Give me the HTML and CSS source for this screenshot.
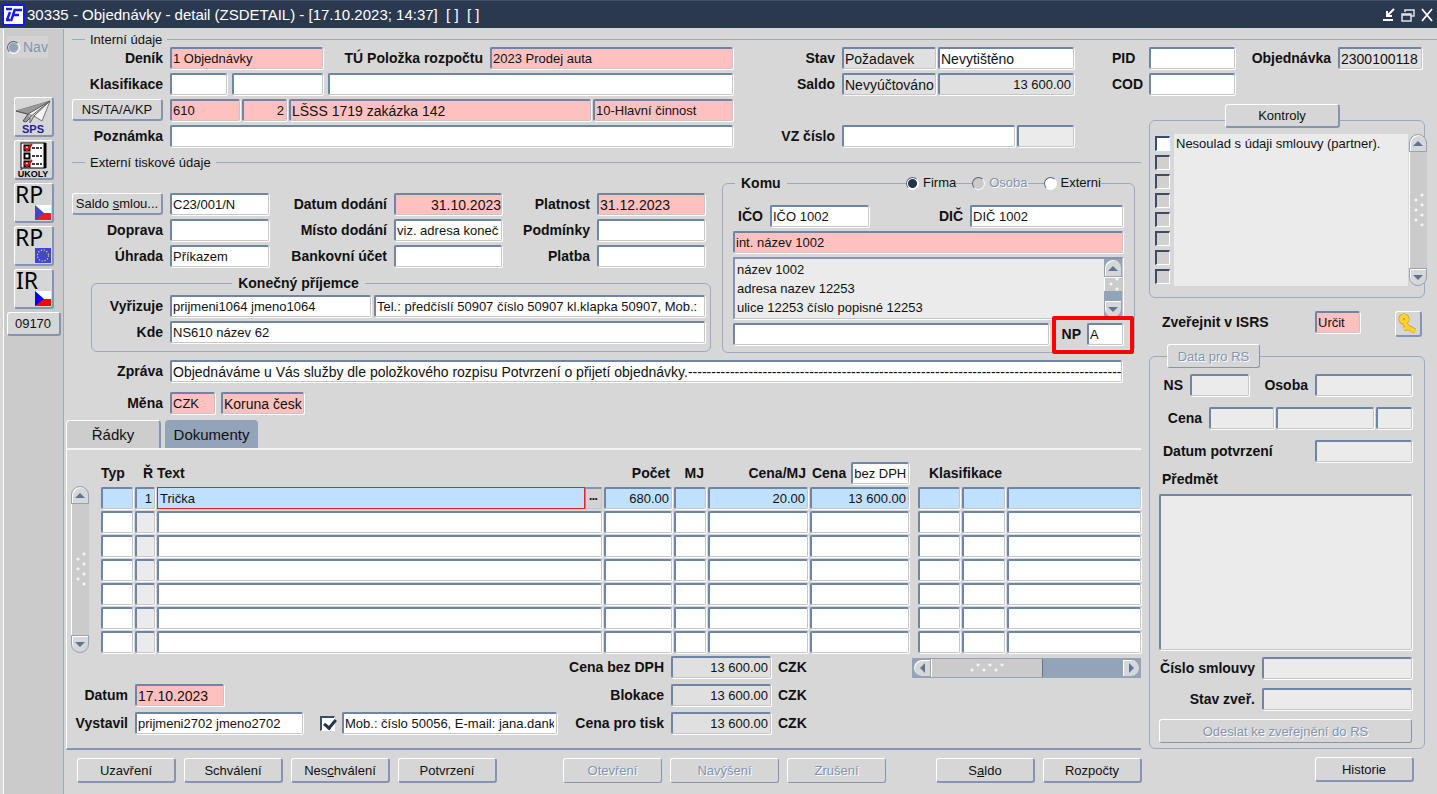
FILE: index.html
```
<!DOCTYPE html>
<html lang="cs">
<head>
    <meta charset="UTF-8">
    <meta name="viewport" content="width=device-width, initial-scale=1.0">
    <title>30335 - Objednávky - detail (ZSDETAIL)</title>
    <link rel="stylesheet" href="styles.css">
</head>
<body>
    <!-- Title bar -->
    <header class="titlebar">
        <svg class="app-logo" viewBox="0 0 23 22" width="23" height="22">
            <rect x="1" y="1" width="21" height="20" fill="#fff" stroke="#1818e8" stroke-width="2"/>
            <path d="M4 5h6M8 8l-3 8M4 16h4M12 6h8M13 5l-4 12M11 11h6" stroke="#1818e8" stroke-width="2.4" fill="none"/>
        </svg>
        <h1>30335 - Objednávky - detail (ZSDETAIL) - [17.10.2023; 14:37]&nbsp; [ ]&nbsp; [ ]</h1>
        <div class="window-buttons">
            <button type="button" aria-label="Minimalizovat"><svg viewBox="0 0 14 14" width="14" height="14"><path d="M12 1L5 8M5 3v5h5M1 12h10" stroke="#fff" stroke-width="2" fill="none"/></svg></button>
            <button type="button" aria-label="Obnovit"><svg viewBox="0 0 14 14" width="14" height="14"><path d="M4 4V2h9v6h-3M4 2h9M1 6h9v7H1zM1 7h9" stroke="#dde2ea" stroke-width="1.5" fill="none"/></svg></button>
            <button type="button" aria-label="Zavřít"><svg viewBox="0 0 14 14" width="14" height="14"><path d="M2 1l10 12M12 1L2 13" stroke="#fff" stroke-width="1.8" fill="none"/></svg></button>
        </div>
    </header>

    <div class="window">
        <!-- Left toolbar -->
        <nav class="toolbar">
            <label class="nav-radio"><input type="radio" class="radio" name="nav" checked disabled> Nav</label>
            <button type="button" class="btn tool" aria-label="SPS">
                <svg viewBox="0 0 36 36" width="36" height="36">
                    <path d="M1 12L35 2 27 22 19 17z" fill="#f4f4f4" stroke="#777"/>
                    <path d="M1 12l12 3L35 2M13 15l-5 7 3 1 4-4" fill="#999" stroke="#555"/>
                    <path d="M19 17L35 2 15 18v6z" fill="#ccc" stroke="#666"/>
                    <text x="18" y="34" text-anchor="middle" class="tool-sps">SPS</text>
                </svg>
            </button>
            <button type="button" class="btn tool" aria-label="Úkoly">
                <svg viewBox="0 0 36 36" width="36" height="36">
                    <rect x="6" y="1" width="24" height="25" fill="#fff" stroke="#000"/>
                    <path d="M30 1v25" stroke="#000" stroke-width="3"/>
                    <path d="M9.500 3.500h5v5h-5zM9.500 11.500h5v5h-5zM9.500 19.500h5v5h-5z" fill="#fff" stroke="#000" stroke-width="2"/>
                    <path d="M17 6h10M17 14h10M17 22h10" stroke="#000" stroke-width="1.500" stroke-dasharray="3 1"/>
                    <path d="M9 5l3 3 5-6M9 21l3 3 5-6" stroke="#f00000" stroke-width="2" fill="none"/>
                    <text x="18" y="35" text-anchor="middle" class="tool-ukoly">ÚKOLY</text>
                </svg>
            </button>
            <button type="button" class="btn tool" aria-label="RP CZ">
                <svg viewBox="0 0 36 36" width="36" height="36">
                    <path d="M20 20h16v8H20z" fill="#fff"/><path d="M20 28h16v7H20z" fill="#ee1c25"/><path d="M20 20l9 8-9 7z" fill="#3f48cc"/>
                    <text x="0" y="18" class="tool-text">RP</text>
                </svg>
            </button>
            <button type="button" class="btn tool" aria-label="RP EU">
                <svg viewBox="0 0 36 36" width="36" height="36">
                    <path d="M20 20h16v15H20z" fill="#3f48cc"/>
                    <circle cx="28" cy="27.500" r="5.500" fill="none" stroke="#ffe400" stroke-width="1.200" stroke-dasharray="1.200 1.680"/>
                    <text x="0" y="18" class="tool-text">RP</text>
                </svg>
            </button>
            <button type="button" class="btn tool" aria-label="IR CZ">
                <svg viewBox="0 0 36 36" width="36" height="36">
                    <path d="M20 20h16v8H20z" fill="#fff"/><path d="M20 28h16v7H20z" fill="#f00"/><path d="M20 20l9 8-9 7z" fill="#00f"/>
                    <text x="1" y="18" class="tool-text">IR</text>
                </svg>
            </button>
            <button type="button" class="btn tool-code">09170</button>
        </nav>

        <main class="form">
            <h2 class="legend">Interní údaje</h2>
            <div class="columns">
                <div class="left">
                    <!-- Interní údaje -->
                    <section class="internal">
                        <div class="rows grow">
                            <div class="row">
                                <label class="lbl" for="denik">Deník</label>
                                <input class="field pink w153" id="denik" value="1 Objednávky">
                                <label class="lbl w153" for="polozka">TÚ Položka rozpočtu</label>
                                <input class="field pink grow" id="polozka" value="2023 Prodej auta">
                            </div>
                            <div class="row tight">
                                <label class="lbl" for="klas1">Klasifikace</label>
                                <input class="field w57" id="klas1">
                                <input class="field w91" aria-label="Klasifikace 2">
                                <input class="field grow" aria-label="Klasifikace 3">
                            </div>
                            <div class="row dense">
                                <button type="button" class="btn lbl-btn">NS/TA/A/KP</button>
                                <input class="field pink w70" aria-label="NS" value="610">
                                <input class="field pink num w45" aria-label="TA" value="2">
                                <input class="field pink text-lg grow" aria-label="A" value="LŠSS 1719 zakázka 142">
                                <input class="field pink w140" aria-label="KP" value="10-Hlavní činnost">
                            </div>
                            <div class="row">
                                <label class="lbl" for="poznamka">Poznámka</label>
                                <input class="field grow" id="poznamka">
                            </div>
                        </div>
                        <div class="rows state">
                            <div class="row dense">
                                <label class="lbl" for="stav">Stav</label>
                                <input class="field gray text-lg w94" id="stav" value="Požadavek" readonly>
                                <input class="field text-lg grow" aria-label="Tisk" value="Nevytištěno">
                            </div>
                            <div class="row dense">
                                <label class="lbl" for="saldo">Saldo</label>
                                <input class="field gray text-lg w94" id="saldo" value="Nevyúčtováno" readonly>
                                <input class="field gray num grow" aria-label="Saldo částka" value="13 600.00" readonly>
                            </div>
                            <div class="row"></div>
                            <div class="row dense">
                                <label class="lbl" for="vz">VZ číslo</label>
                                <input class="field grow" id="vz">
                                <input class="field off w57" aria-label="VZ stav" readonly>
                            </div>
                        </div>
                        <div class="rows ids">
                            <label for="pid">PID</label>
                            <label for="cod">COD</label>
                        </div>
                    </section>

                    <!-- Externí tiskové údaje -->
                    <h2 class="legend second">Externí tiskové údaje</h2>
                    <section class="external">
                        <div class="grow">
                            <div class="rows delivery">
                                <div class="row">
                                    <button type="button" class="btn lbl-btn">Saldo <u>s</u>mlou...</button>
                                    <input class="field w99" aria-label="Smlouva" value="C23/001/N">
                                    <label class="lbl grow" for="datdod">Datum dodání</label>
                                    <input class="field pink num text-lg w108" id="datdod" value="31.10.2023">
                                    <label class="lbl w81" for="platnost">Platnost</label>
                                    <input class="field pink text-lg w108" id="platnost" value="31.12.2023">
                                </div>
                                <div class="row">
                                    <label class="lbl" for="doprava">Doprava</label>
                                    <input class="field w99" id="doprava">
                                    <label class="lbl grow" for="misto">Místo dodání</label>
                                    <input class="field w108" id="misto" value="viz. adresa konečného příjemce">
                                    <label class="lbl w81" for="podminky">Podmínky</label>
                                    <input class="field w108" id="podminky">
                                </div>
                                <div class="row">
                                    <label class="lbl" for="uhrada">Úhrada</label>
                                    <input class="field w99" id="uhrada" value="Příkazem">
                                    <label class="lbl grow" for="ucet">Bankovní účet</label>
                                    <input class="field w108" id="ucet">
                                    <label class="lbl w81" for="platba">Platba</label>
                                    <input class="field w108" id="platba">
                                </div>
                            </div>
                            <div class="panel recipient">
                                <div class="panel-head"><h3>Konečný příjemce</h3></div>
                                <div class="rows">
                                    <div class="row">
                                        <label class="lbl" for="vyrizuje">Vyřizuje</label>
                                        <div class="pair grow">
                                            <input class="field w201" id="vyrizuje" value="prijmeni1064 jmeno1064">
                                            <input class="field grow" aria-label="Kontakt" value="Tel.: předčíslí 50907 číslo 50907 kl.klapka 50907, Mob.:">
                                        </div>
                                    </div>
                                    <div class="row">
                                        <label class="lbl" for="kde">Kde</label>
                                        <input class="field grow" id="kde" value="NS610 název 62">
                                    </div>
                                </div>
                            </div>
                        </div>

                        <div class="panel addressee">
                            <div class="panel-head">
                                <h3>Komu</h3>
                                <span class="radios">
                                    <label><input type="radio" class="radio" name="komu" checked> Firma</label>
                                    <label class="disabled"><input type="radio" class="radio" name="komu" disabled> Osoba</label>
                                    <label><input type="radio" class="radio" name="komu"> Externi</label>
                                </span>
                            </div>
                            <div class="rows">
                                <div class="row">
                                    <label class="lbl w30" for="ico">IČO</label>
                                    <input class="field w99" id="ico" value="IČO 1002">
                                    <label class="lbl grow" for="dic">DIČ</label>
                                    <input class="field w153" id="dic" value="DIČ 1002">
                                </div>
                                <input class="field pink" aria-label="Interní název" value="int. název 1002">
                                <div class="address">
                                    <textarea class="grow" aria-label="Adresa" readonly>název 1002
adresa nazev 12253
ulice 12253 číslo popisné 12253</textarea>
                                    <div class="vscroll blue">
                                        <button type="button" class="up" aria-label="Nahoru"></button>
                                        <span class="thumb"><i class="dots"></i></span>
                                        <button type="button" class="down" aria-label="Dolů"></button>
                                    </div>
                                </div>
                                <div class="row">
                                    <input class="field grow" aria-label="Doplněk adresy">
                                    <div class="marked">
                                        <label for="np">NP</label>
                                        <input class="field w36" id="np" value="A">
                                    </div>
                                </div>
                            </div>
                        </div>
                    </section>

                    <div class="row message">
                        <label class="lbl" for="zprava">Zpráva</label>
                        <input class="field text-lg grow" id="zprava" value="Objednáváme u Vás služby dle položkového rozpisu Potvrzení o přijetí objednávky.------------------------------------------------------------------------------------------------------------------------------------------------------">
                    </div>
                    <div class="row currency">
                        <label class="lbl" for="mena">Měna</label>
                        <div class="pair wide">
                            <input class="field pink w45" id="mena" value="CZK">
                            <input class="field pink text-lg w83" aria-label="Název měny" value="Koruna česk">
                        </div>
                    </div>

                    <!-- Řádky / Dokumenty -->
                    <div class="tabs">
                        <button type="button" class="tab active">Řádky</button>
                        <button type="button" class="tab">Dokumenty</button>
                    </div>
                    <section class="tab-panel">
                        <div class="lines">
                            <div class="vscroll">
                                <button type="button" class="up" aria-label="Nahoru"></button>
                                <span class="thumb"><i class="dots"></i></span>
                                <button type="button" class="down" aria-label="Dolů"></button>
                            </div>
                            <table>
                                <colgroup>
                                    <col class="c-typ"><col class="c-r"><col><col class="c-pocet"><col class="c-mj">
                                    <col class="c-cenamj"><col class="c-cena"><col class="c-k1"><col class="c-k2"><col class="c-k3">
                                </colgroup>
                                <thead>
                                    <tr>
                                        <th>Typ</th>
                                        <th class="right">Ř</th>
                                        <th>Text</th>
                                        <th class="right">Počet</th>
                                        <th class="right">MJ</th>
                                        <th class="right">Cena/MJ</th>
                                        <th><div class="th-price"><label for="dph">Cena</label><input class="field grow" id="dph" value="bez DPH"></div></th>
                                        <th colspan="3" class="th-klas">Klasifikace</th>
                                    </tr>
                                </thead>
                                <tbody id="lines">
                                    <tr class="current">
                                        <td><input class="field" aria-label="Typ"></td>
                                        <td><input class="field num" aria-label="Ř" value="1"></td>
                                        <td><div class="edit"><input class="field active" aria-label="Text" value="Trička"><button type="button" aria-label="Upravit text">•••</button></div></td>
                                        <td><input class="field num" aria-label="Počet" value="680.00"></td>
                                        <td><input class="field" aria-label="MJ"></td>
                                        <td><input class="field num" aria-label="Cena/MJ" value="20.00"></td>
                                        <td><input class="field num" aria-label="Cena" value="13 600.00"></td>
                                        <td><input class="field" aria-label="Klasifikace 1"></td>
                                        <td><input class="field" aria-label="Klasifikace 2"></td>
                                        <td><input class="field" aria-label="Klasifikace 3"></td>
                                    </tr>
                                </tbody>
                            </table>
                        </div>
                        <div class="summary">
                            <div class="rows issued">
                                <div class="row">
                                    <label class="lbl w57" for="datum">Datum</label>
                                    <input class="field pink text-lg w89" id="datum" value="17.10.2023">
                                </div>
                                <div class="row">
                                    <label class="lbl w57" for="vystavil">Vystavil</label>
                                    <input class="field w168" id="vystavil" value="prijmeni2702 jmeno2702">
                                    <input type="checkbox" class="check" aria-label="Tisknout kontakt" checked>
                                    <input class="field w215" aria-label="Kontakt vystavil" value="Mob.: číslo 50056, E-mail: jana.dankova@firma.cz">
                                </div>
                            </div>
                            <div class="rows totals">
                                <div class="row">
                                    <label class="lbl w100" for="bezdph">Cena bez DPH</label>
                                    <input class="field gray num w100" id="bezdph" value="13 600.00" readonly>
                                    <b>CZK</b>
                                </div>
                                <div class="row">
                                    <label class="lbl w100" for="blokace">Blokace</label>
                                    <input class="field gray num w100" id="blokace" value="13 600.00" readonly>
                                    <b>CZK</b>
                                </div>
                                <div class="row">
                                    <label class="lbl w100" for="tisk">Cena pro tisk</label>
                                    <input class="field gray num w100" id="tisk" value="13 600.00" readonly>
                                    <b>CZK</b>
                                </div>
                            </div>
                            <div class="hscroll">
                                <button type="button" class="prev" aria-label="Vlevo"></button>
                                <span class="thumb"><i class="dots wide"></i></span>
                                <button type="button" class="next" aria-label="Vpravo"></button>
                            </div>
                        </div>
                    </section>

                    <div class="actions">
                        <button type="button" class="btn">Uzavření</button>
                        <button type="button" class="btn">Schválení</button>
                        <button type="button" class="btn">Nes<u>c</u>hválení</button>
                        <button type="button" class="btn">Potvrzení</button>
                        <span class="actions-group">
                            <button type="button" class="btn" disabled>Otevření</button>
                            <button type="button" class="btn w109" disabled>Navýšení</button>
                            <button type="button" class="btn" disabled>Zrušení</button>
                        </span>
                        <span class="actions-end">
                            <button type="button" class="btn">S<u>a</u>ldo</button>
                            <button type="button" class="btn">Rozpočty</button>
                        </span>
                    </div>
                </div>

                <!-- Right column -->
                <aside class="right-col">
                    <div class="rows">
                        <div class="row order">
                            <input class="field w86" id="pid">
                            <label class="lbl grow" for="objednavka">Objednávka</label>
                            <input class="field gray text-lg w84" id="objednavka" value="2300100118" readonly>
                        </div>
                        <div class="row">
                            <input class="field w86" id="cod">
                        </div>
                    </div>

                    <div class="panel checks">
                        <button type="button" class="btn checks-btn">Kontroly</button>
                        <div class="checks-body">
                            <ul>
                                <li class="current"><input type="checkbox" class="check" id="k1"><label for="k1">Nesoulad s údaji smlouvy (partner).</label></li>
                                <li><input type="checkbox" class="check" id="k2" disabled><label for="k2"></label></li>
                                <li><input type="checkbox" class="check" id="k3" disabled><label for="k3"></label></li>
                                <li><input type="checkbox" class="check" id="k4" disabled><label for="k4"></label></li>
                                <li><input type="checkbox" class="check" id="k5" disabled><label for="k5"></label></li>
                                <li><input type="checkbox" class="check" id="k6" disabled><label for="k6"></label></li>
                                <li><input type="checkbox" class="check" id="k7" disabled><label for="k7"></label></li>
                                <li><input type="checkbox" class="check" id="k8" disabled><label for="k8"></label></li>
                            </ul>
                            <div class="vscroll">
                                <button type="button" class="up" aria-label="Nahoru"></button>
                                <span class="thumb"><i class="dots"></i></span>
                                <button type="button" class="down" aria-label="Dolů"></button>
                            </div>
                        </div>
                    </div>

                    <div class="publish">
                        <label class="grow" for="isrs">Zveřejnit v ISRS</label>
                        <input class="field pink w45" id="isrs" value="Určit">
                        <button type="button" class="btn key" aria-label="Klíč">
                            <svg viewBox="0 0 24 24" width="24" height="24">
                                <g fill="none" stroke="#c58a00" stroke-width="5"><circle cx="8" cy="7" r="3"/><path d="M8 9l3 6 8 4M12 15l-4 2M17 18l-1 2"/></g>
                                <g fill="none" stroke="#ffd22e" stroke-width="4"><circle cx="8" cy="7" r="3"/><path d="M8 9l3 6 8 4M12 15l-4 2M17 18l-1 2"/></g>
                            </svg>
                        </button>
                    </div>

                    <div class="panel registry">
                        <button type="button" class="btn registry-btn" disabled>Data pro RS</button>
                        <div class="row">
                            <label class="lbl w24" for="ns">NS</label>
                            <input class="field off w59" id="ns" disabled>
                            <label class="lbl grow" for="osoba">Osoba</label>
                            <input class="field off w97" id="osoba" disabled>
                        </div>
                        <div class="row dense">
                            <label class="lbl w43" for="cena">Cena</label>
                            <input class="field off w65" id="cena" disabled>
                            <input class="field off grow" aria-label="Cena s DPH" disabled>
                            <input class="field off w36" aria-label="Měna RS" disabled>
                        </div>
                        <div class="row confirmed">
                            <label for="potvrzeni">Datum potvrzení</label>
                            <input class="field off w97" id="potvrzeni" disabled>
                        </div>
                        <label class="subject-label" for="predmet">Předmět</label>
                        <textarea class="field off subject" id="predmet" disabled></textarea>
                        <div class="row">
                            <label class="lbl grow" for="smlouva">Číslo smlouvy</label>
                            <input class="field off w150" id="smlouva" disabled>
                        </div>
                        <div class="row">
                            <label class="lbl grow" for="zver">Stav zveř.</label>
                            <input class="field off w150" id="zver" disabled>
                        </div>
                        <button type="button" class="btn send" disabled>Odeslat ke zveřejnění do RS</button>
                    </div>
                    <div class="actions history">
                        <button type="button" class="btn">Historie</button>
                    </div>
                </aside>
            </div>
        </main>
    </div>
    <script src="script.js"></script>
</body>
</html>
```

FILE: styles.css
```
/* General styling */
* {
    margin: 0;
    padding: 0;
    box-sizing: border-box;
}
body {
    min-height: 100vh;
    display: flex;
    flex-direction: column;
    font-family: "Liberation Sans", Arial, sans-serif;
    font-size: 14px;
    color: #111;
    background-color: #d7d7d7;
}
button, input, textarea {
    font: inherit;
    color: inherit;
}
h1, h2, h3 {
    font-weight: normal;
}

/* Title bar */
.titlebar {
    display: flex;
    align-items: center;
    height: 28px;
    padding: 0 3px 0 2px;
    background-color: #2b394f;
    border-top: 1px solid #44536a;
    color: #fff;
}
.titlebar h1 {
    flex: 1;
    margin-left: 2px;
    font-size: 15px;
}
.window-buttons {
    display: flex;
    gap: 5px;
}
.window-buttons button {
    display: flex;
    border: none;
    background: none;
}

/* Toolbar */
.window {
    flex: 1;
    display: flex;
}
.toolbar {
    display: flex;
    flex-direction: column;
    align-items: center;
    gap: 3px;
    width: 61px;
    flex: none;
    margin: 1px 0 0 3px;
    padding-top: 7px;
    background-color: #cbcbcb;
    border-left: 1px solid #fff;
    border-right: 1px solid #9aaac0;
}
.nav-radio {
    display: flex;
    align-items: center;
    align-self: flex-start;
    gap: 3px;
    height: 22px;
    margin: 0 0 36px 3px;
    background-color: #d3d3d3;
    color: #8195b0;
}
.tool {
    width: 40px;
    height: 40px;
    display: flex;
    align-items: center;
    justify-content: center;
}
.tool svg {
    overflow: visible;
}
.tool-text {
    font-family: "Noto Sans", sans-serif;
    font-size: 23px;
    fill: #000;
}
.tool-sps {
    font-size: 11px;
    font-weight: bold;
    fill: #1c1c9c;
}
.tool-ukoly {
    font-size: 9px;
    font-weight: bold;
    fill: #000;
}
.tool-code {
    width: 54px;
    height: 24px;
}

/* Buttons */
.btn {
    background-color: #d6d6d6;
    border: 1px solid #fff;
    border-right: 2px solid #8395b0;
    border-bottom: 2px solid #8395b0;
    border-radius: 3px;
    font-size: 13px;
    white-space: nowrap;
}
.btn:disabled {
    color: #8195b0;
    border-right-width: 1px;
    border-bottom-width: 1px;
    text-shadow: 1px 1px 0 #fff;
}

/* Fields */
.field {
    display: block;
    width: 100%;
    min-width: 0;
    height: 22px;
    padding: 0 2px 0 1px;
    background-color: #fff;
    border: 1px solid #c6c6c6;
    border-top: 2px solid #6f85a5;
    border-left: 2px solid #6f85a5;
    border-radius: 2px;
    box-shadow: 1px 1px 0 #fff;
    font-size: 13px;
    font-weight: normal;
    outline: none;
    resize: none;
}
.field.text-lg {
    padding-right: 0;
    font-size: 14px;
}
.field.pink {
    background-color: #ffc0c0;
}
.field.gray {
    background-color: #e0e0e0;
}
.field.off {
    background-color: #ebebeb;
}
.field.num {
    text-align: right;
}
.field.active {
    border: 1px solid #f02020;
    border-radius: 0;
    box-shadow: none;
    padding-left: 2px;
}

/* Rows and labels */
.rows {
    display: flex;
    flex-direction: column;
    gap: 4px;
}
.row {
    display: flex;
    align-items: center;
    gap: 7px;
    min-height: 22px;
}
.row.tight {
    gap: 5px;
}
.row.dense {
    gap: 2px;
}
.row.tight .lbl {
    margin-right: 2px;
}
.row.dense .lbl,
.row.dense .lbl-btn {
    margin-right: 5px;
}
.pair {
    display: flex;
    gap: 3px;
}
.pair.wide {
    gap: 6px;
}
.grow {
    flex: 1;
    min-width: 0;
}
label,
.totals b,
.panel-head h3 {
    font-size: 14px;
    font-weight: bold;
    white-space: nowrap;
}
.lbl {
    width: 91px;
    text-align: right;
}
.lbl-btn {
    width: 91px;
    height: 22px;
    text-align: center;
}
.w24 { width: 24px; flex: none; }
.w30 { width: 30px; flex: none; }
.w36 { width: 36px; flex: none; }
.w43 { width: 43px; flex: none; }
.w45 { width: 45px; flex: none; }
.w57 { width: 57px; flex: none; }
.w59 { width: 59px; flex: none; }
.w65 { width: 65px; flex: none; }
.w70 { width: 70px; flex: none; }
.w81 { width: 81px; flex: none; }
.w83 { width: 83px; flex: none; }
.w84 { width: 84px; flex: none; }
.w86 { width: 86px; flex: none; }
.w89 { width: 89px; flex: none; }
.w91 { width: 91px; flex: none; }
.w94 { width: 94px; flex: none; }
.w97 { width: 97px; flex: none; }
.w99 { width: 99px; flex: none; }
.w100 { width: 100px; flex: none; }
.w108 { width: 108px; flex: none; }
.w140 { width: 140px; flex: none; }
.w150 { width: 150px; flex: none; }
.w153 { width: 153px; flex: none; }
.w168 { width: 168px; flex: none; }
.w201 { width: 201px; flex: none; }
.w215 { width: 215px; flex: none; }

/* Section titles with a line on both sides */
.legend {
    display: flex;
    align-items: center;
    gap: 5px;
    height: 16px;
    font-size: 13px;
}
.legend::before,
.legend::after {
    content: "";
    height: 1px;
    width: 13px;
    background-color: #9aaac0;
}
.legend::after {
    flex: 1;
}
.legend.second {
    margin: 7px 8px 0 0;
}

/* Page columns */
.form {
    flex: 1;
    min-width: 0;
    padding: 3px 0 0 8px;
}
.columns {
    display: flex;
}
.left {
    flex: 1;
    min-width: 0;
}
.right-col {
    flex: none;
    width: 276px;
    margin-right: 12px;
}
.internal {
    display: flex;
}
.state {
    width: 341px;
}
.state .lbl {
    width: 102px;
}
.ids {
    width: 75px;
    padding-left: 38px;
    line-height: 22px;
}

/* Panels */
.panel {
    border: 1px solid #9aaac0;
    border-radius: 6px;
}
.panel-head {
    display: flex;
    height: 16px;
    margin-top: -9px;
    line-height: 16px;
}
.panel-head h3 {
    padding: 0 6px;
    background-color: #d7d7d7;
}
.external {
    display: flex;
    gap: 11px;
    margin-right: 14px;
}
.delivery {
    padding: 23px 6px 0 0;
}
.recipient {
    margin: 16px 0 0 19px;
    padding: 0 5px 8px 0;
}
.recipient .panel-head {
    justify-content: center;
    padding-right: 200px;
    margin-bottom: 4px;
}
.recipient .lbl {
    width: 71px;
}
.addressee {
    width: 413px;
    margin-top: 13px;
    padding: 0 11px 7px 10px;
}
.addressee .panel-head {
    justify-content: space-between;
    padding: 0 22px 0 2px;
    margin-bottom: 14px;
}
.radios {
    display: flex;
    gap: 16px;
}
.radios label {
    display: flex;
    align-items: center;
    gap: 4px;
    font-size: 13px;
    font-weight: normal;
    background-color: #d7d7d7;
}
.radios .disabled {
    color: #8195b0;
    text-shadow: 1px 1px 0 #fff;
}
.radio {
    appearance: none;
    width: 13px;
    height: 13px;
    border: 1px solid #fff;
    border-top-color: #55647c;
    border-left-color: #55647c;
    border-radius: 50%;
    background-color: #fff;
}
.radio:checked {
    background: radial-gradient(#24344e 4px, #fff 5px);
}
.radio:disabled {
    background-color: #cbcbcb;
}
.radio:checked:disabled {
    background: radial-gradient(#93a3b8 4px, #d3d3d3 5px);
}
.nav-radio {
    font-weight: normal;
}
.address {
    display: flex;
    height: 62px;
    border: 1px solid #c6c6c6;
    border-top: 2px solid #8395b0;
    border-left: 2px solid #8395b0;
    box-shadow: 1px 1px 0 #fff;
    background-color: #ebebeb;
}
.address textarea {
    padding: 1px 2px;
    border: none;
    outline: none;
    resize: none;
    overflow: hidden;
    background: none;
    font-size: 13px;
    line-height: 19px;
}
.marked {
    position: relative;
    display: flex;
    align-items: center;
    gap: 6px;
    margin-left: 6px;
}
.marked::after {
    content: "";
    position: absolute;
    inset: -7px -11px -9px -10px;
    border: 4px solid #f00;
    border-radius: 2px;
    pointer-events: none;
}
.message {
    margin: 7px 27px 10px 0;
}

/* Tabs */
.tabs {
    display: flex;
    gap: 4px;
    margin: 6px 8px 0 -6px;
}
.tab {
    width: 93px;
    height: 28px;
    border: none;
    border-radius: 4px 4px 0 0;
    background-color: #93a3b8;
    font-size: 15px;
}
.tab.active {
    width: 95px;
    background-color: #cdcdcd;
    border: 1px solid #fff;
    border-right: 2px solid #8395b0;
    border-bottom: none;
}
.tab-panel {
    margin: 0 8px 0 -6px;
    padding: 12px 0 14px 4px;
    border-top: 2px solid #f4f4f4;
    border-left: 1px solid #fff;
    border-bottom: 2px solid #8395b0;
}
.lines {
    display: flex;
    gap: 12px;
}
.lines .vscroll {
    margin-top: 24px;
    height: 167px;
}
table {
    flex: 1;
    min-width: 0;
    width: 100%;
    table-layout: fixed;
    border-collapse: collapse;
}
.c-typ, .c-mj { width: 34px; }
.c-r { width: 22px; }
.c-pocet { width: 70px; }
.c-cenamj { width: 102px; }
.c-cena { width: 108px; }
.c-k1 { width: 44px; }
.c-k2 { width: 45px; }
.c-k3 { width: 134px; }
th {
    height: 25px;
    padding-bottom: 3px;
    text-align: left;
    white-space: nowrap;
}
th.right {
    text-align: right;
    padding-right: 4px;
}
th.th-klas {
    padding-left: 11px;
}
.th-price {
    display: flex;
    align-items: center;
    gap: 5px;
    padding: 0 9px 0 2px;
}
td {
    height: 24px;
    padding-right: 2px;
    vertical-align: top;
}
td:nth-child(7) {
    padding-right: 9px;
}
td:last-child {
    padding-right: 0;
}
td:nth-child(2) .field {
    background-color: #ebebeb;
}
.current td .field {
    background-color: #c0e0ff;
}
.edit {
    display: flex;
}
.edit button {
    width: 17px;
    height: 22px;
    flex: none;
    border: 1px solid #c6c6c6;
    border-top: 2px solid #8395b0;
    border-left: 1px solid #8395b0;
    background-color: #d3d3d3;
    font-size: 8px;
}

/* Scrollbars */
.vscroll,
.hscroll {
    display: flex;
    flex: none;
    background-color: #cbcbcb;
}
.vscroll {
    flex-direction: column;
    width: 18px;
    border-radius: 9px;
}
.vscroll.blue {
    border-radius: 0;
}
.vscroll.blue,
.hscroll {
    background-color: #93a3b8;
}
.vscroll button,
.hscroll button {
    display: flex;
    align-items: center;
    justify-content: center;
    flex: none;
    height: 18px;
    border: 1px solid #93a3b8;
    background-color: #d7d7d7;
    box-shadow: inset 1px 1px 0 #fff;
}
.vscroll .up { border-radius: 9px 9px 0 0; }
.vscroll .down { border-radius: 0 0 9px 9px; }
.hscroll .prev { border-radius: 9px 0 0 9px; }
.hscroll .next { border-radius: 0 9px 9px 0; }
.vscroll button::before,
.hscroll button::before {
    content: "";
    border: 5px solid transparent;
}
.vscroll .up::before {
    border-top: none;
    border-bottom-color: #5d7498;
}
.vscroll .down::before {
    border-bottom: none;
    border-top-color: #5d7498;
}
.hscroll .prev::before {
    border-left: none;
    border-right-color: #5d7498;
}
.hscroll .next::before {
    border-right: none;
    border-left-color: #5d7498;
}
.thumb {
    flex: 1;
    display: flex;
    align-items: center;
    justify-content: center;
    border-left: 1px solid #fff;
    background-color: #cbcbcb;
    overflow: hidden;
}
.blue .thumb {
    flex: none;
    height: 14px;
    margin-bottom: auto;
    border-top: 1px solid #fff;
}
.dots {
    width: 12px;
    height: 35px;
    background: radial-gradient(circle at 3px 7px, #f4f4f4 1px, transparent 2px), radial-gradient(circle at 9px 2px, #f4f4f4 1px, transparent 2px);
    background-size: 12px 10px;
}
.dots.wide {
    width: 36px;
    height: 10px;
}
.hscroll {
    width: 229px;
    height: 20px;
    padding: 1px;
    margin: 3px 0 0 auto;
}
.hscroll button {
    width: 18px;
}
.hscroll .thumb {
    flex: none;
    width: 112px;
    margin-right: auto;
    border-right: 1px solid #5d7498;
}

/* Summary under the lines */
.summary {
    display: flex;
}
.summary .rows {
    gap: 6px;
    justify-content: flex-end;
}
.check {
    appearance: none;
    flex: none;
    width: 15px;
    height: 15px;
    border: 1px solid #fff;
    border-top: 2px solid #3d4c64;
    border-left: 2px solid #3d4c64;
    background-color: #fff;
}
.check:disabled {
    background-color: #d0d0d0;
}
.check:checked::before {
    content: "";
    display: block;
    width: 5px;
    height: 9px;
    margin: -1px 0 0 4px;
    border-right: 3px solid #24344e;
    border-bottom: 3px solid #24344e;
    transform: rotate(40deg);
}
.issued .check {
    margin-left: 10px;
}
.totals {
    padding-left: 7px;
    margin-top: 1px;
}

/* Buttons at the bottom */
.actions {
    display: flex;
    gap: 8px;
    margin: 8px 7px 0 5px;
}
.actions .btn {
    width: 99px;
    height: 25px;
}
.actions .w109 {
    width: 109px;
}
.actions-group,
.actions-end {
    display: flex;
    gap: 8px;
}
.actions-group {
    margin-left: 58px;
}
.actions-end {
    margin-left: auto;
}

/* Right column */
.order {
    padding-right: 3px;
}
.checks {
    margin-top: 25px;
    padding: 0 0 11px 5px;
}
.checks-btn {
    display: block;
    width: 115px;
    height: 24px;
    margin: -17px 0 6px 70px;
}
.checks-body {
    display: flex;
    gap: 1px;
    margin-right: -3px;
}
.checks ul {
    flex: 1;
    list-style: none;
}
.checks li {
    display: flex;
    align-items: center;
    gap: 4px;
    height: 19px;
}
.checks li label {
    flex: 1;
    height: 19px;
    padding-left: 2px;
    line-height: 19px;
    background-color: #ebebeb;
    font-size: 13px;
    font-weight: normal;
}
.checks .current .check {
    box-shadow: 0 0 0 1px #c0e0ff;
}
.publish {
    display: flex;
    margin-top: 13px;
    padding: 0 3px 0 13px;
    line-height: 22px;
}
.key {
    width: 27px;
    height: 26px;
    margin-left: 35px;
    overflow: hidden;
}
.registry {
    margin-top: 19px;
    padding: 0 12px 5px 9px;
}
.registry .row {
    margin-bottom: 9px;
}
.registry .row.dense,
.registry .row:nth-child(2) {
    margin-bottom: 11px;
}
.registry-btn {
    display: block;
    width: 93px;
    height: 24px;
    margin: -13px 0 6px 8px;
}
.confirmed {
    justify-content: space-between;
    padding-left: 4px;
}
.subject-label {
    display: block;
    margin: 0 0 7px 3px;
    line-height: 16px;
}
.subject {
    height: 156px;
    margin-bottom: 7px;
}
.send {
    width: 100%;
    height: 24px;
}
.history {
    justify-content: flex-end;
    margin-right: 11px;
}
```

FILE: script.js
```
const columns = ['Typ', 'Ř', 'Text', 'Počet', 'MJ', 'Cena/MJ', 'Cena', 'Klasifikace 1', 'Klasifikace 2', 'Klasifikace 3'];
const lines = document.getElementById('lines');

// Empty lines below the current one
for (let i = 2; i <= 7; i++) {
    const tr = document.createElement('tr');
    columns.forEach(name => {
        const td = document.createElement('td');
        const input = document.createElement('input');
        input.className = 'field';
        input.setAttribute('aria-label', name + ', řádek ' + i);
        td.appendChild(input);
        tr.appendChild(td);
    });
    lines.appendChild(tr);
}
```
